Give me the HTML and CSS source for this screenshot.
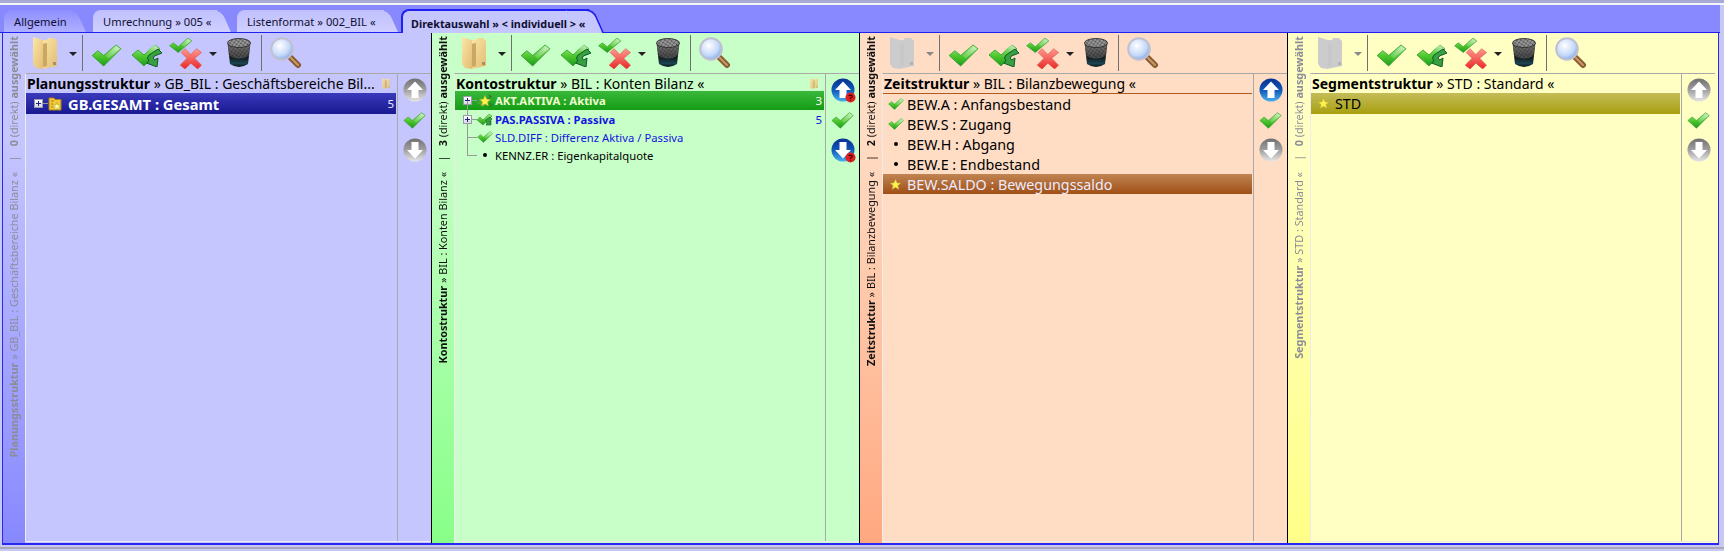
FILE: index.html
```html
<!DOCTYPE html>
<html lang="de">
<head>
    <meta charset="UTF-8">
    <title>Direktauswahl</title>
    <link rel="stylesheet" href="styles.css">
</head>
<body>
    <svg class="sprite" aria-hidden="true">
        <defs>
            <linearGradient id="g-green" x1="0" y1="0" x2="0" y2="1"><stop offset="0" stop-color="#9df07a"/><stop offset="0.55" stop-color="#4cc52c"/><stop offset="1" stop-color="#1c9a1c"/></linearGradient>
            <linearGradient id="g-tip" x1="0" y1="1" x2="1" y2="0"><stop offset="0" stop-color="#58c840"/><stop offset="1" stop-color="#d8f4d0"/></linearGradient>
            <linearGradient id="g-red" x1="0" y1="0" x2="0" y2="1"><stop offset="0" stop-color="#ff9a90"/><stop offset="1" stop-color="#e82828"/></linearGradient>
            <linearGradient id="g-folder" x1="0" y1="0" x2="1" y2="1"><stop offset="0" stop-color="#fbe6a8"/><stop offset="1" stop-color="#e2bd72"/></linearGradient>
            <linearGradient id="g-trash" x1="0" y1="0" x2="0" y2="1"><stop offset="0" stop-color="#5a5a5a"/><stop offset="0.55" stop-color="#101010"/><stop offset="0.85" stop-color="#1c4450"/><stop offset="1" stop-color="#0a1418"/></linearGradient>
            <radialGradient id="g-lens" cx="0.4" cy="0.35" r="0.75"><stop offset="0" stop-color="#ffffff"/><stop offset="0.6" stop-color="#c4d8f8"/><stop offset="1" stop-color="#6f9ae0"/></radialGradient>
            <linearGradient id="g-btn-grey" x1="0" y1="0" x2="0" y2="1"><stop offset="0" stop-color="#707070"/><stop offset="0.5" stop-color="#a0a0a0"/><stop offset="1" stop-color="#e6e6e6"/></linearGradient>
            <linearGradient id="g-btn-blue" x1="0" y1="0" x2="0" y2="1"><stop offset="0" stop-color="#0a3090"/><stop offset="0.5" stop-color="#0f58b8"/><stop offset="1" stop-color="#48b0f0"/></linearGradient>
            <pattern id="p-mesh" width="3" height="3" patternUnits="userSpaceOnUse" patternTransform="rotate(35)"><rect width="3" height="3" fill="#444"/><path d="M0 1H3M1 0V3" stroke="#c8c8c8" stroke-width="0.8"/></pattern>

            <symbol id="i-folder" viewBox="0 0 24 32">
                <path d="M9 3L14 3 15 1H21L24 4V29L9 32Z" fill="url(#g-folder)"/>
                <path d="M9 7L14 6V29L9 30Z" fill="#c9a864"/>
                <path d="M0 0L10 3V32L3 31 0 27Z" fill="url(#g-folder)"/>
                <path d="M20 25h3v3h-3z" fill="#a89060"/>
            </symbol>
            <symbol id="i-check" viewBox="0 0 32 24">
                <path d="M1 12L7 7 13 12 26 1 31 5 13 23Z" fill="url(#g-green)" stroke="#2a9a2a" stroke-width="0.8"/>
                <path d="M15 12L26 2 30 5 18 15Z" fill="url(#g-tip)"/>
            </symbol>
            <symbol id="i-check-back" viewBox="0 0 32 24">
                <path d="M1 12L7 7 13 12 24 2 29 6 13 23Z" fill="url(#g-green)" stroke="#2a9a2a" stroke-width="0.8"/>
                <path d="M17 7L24 2 28 6 21 10Z" fill="url(#g-tip)"/>
                <path d="M27 6L18 12Q15 15 18 18L15.5 20 26 24 27 15 23.5 17Q21 15 23.5 13L31 10Z" fill="#38a040" stroke="#0e5a28" stroke-width="1"/>
            </symbol>
            <symbol id="i-check-clear" viewBox="0 0 34 32">
                <path d="M0 8L4 5 9 9 19 0 23 3 9 15Z" fill="url(#g-green)" stroke="#2a9a2a" stroke-width="0.6"/>
                <path d="M12 7L19 1 22 3 15 9Z" fill="url(#g-tip)"/>
                <path d="M12 15L16 11 22 17 28 11 33 15 26 21 33 28 29 32 22 26 16 32 11 28 18 21Z" fill="url(#g-red)" stroke="#e04a40" stroke-width="0.6"/>
            </symbol>
            <symbol id="i-trash" viewBox="0 0 24 30">
                <path d="M0.5 5L3 26Q12 32 21 26L23.5 5Z" fill="url(#g-trash)"/>
                <path d="M1.5 8L2.5 18Q12 23 21.5 18L22.5 8Z" fill="url(#p-mesh)" opacity="0.45"/>
                <ellipse cx="12" cy="5" rx="11.5" ry="4.5" fill="url(#p-mesh)" stroke="#222" stroke-width="0.8"/>
            </symbol>
            <symbol id="i-lens" viewBox="0 0 32 32">
                <path d="M20 20L28 28" stroke="#8a5a30" stroke-width="6" stroke-linecap="round"/>
                <path d="M21 21L28 28" stroke="#c89a68" stroke-width="2" stroke-linecap="round"/>
                <circle cx="12" cy="12" r="10.8" fill="url(#g-lens)" stroke="#c0c0d0" stroke-width="2"/>
            </symbol>
            <symbol id="i-up-grey" viewBox="0 0 24 24">
                <circle cx="12" cy="12" r="11.5" fill="url(#g-btn-grey)"/>
                <path d="M12 3.5L20 12H15.5V20H8.5V12H4Z" fill="#fff"/>
            </symbol>
            <symbol id="i-down-grey" viewBox="0 0 24 24">
                <circle cx="12" cy="12" r="11.5" fill="url(#g-btn-grey)"/>
                <path d="M12 20.5L20 12H15.5V4H8.5V12H4Z" fill="#fff"/>
            </symbol>
            <symbol id="i-up-blue" viewBox="0 0 24 24">
                <circle cx="12" cy="12" r="11.5" fill="url(#g-btn-blue)"/>
                <path d="M12 3.5L20 12H15.5V20H8.5V12H4Z" fill="#fff"/>
            </symbol>
            <symbol id="i-down-blue" viewBox="0 0 24 24">
                <circle cx="12" cy="12" r="11.5" fill="url(#g-btn-blue)"/>
                <path d="M12 20.5L20 12H15.5V4H8.5V12H4Z" fill="#fff"/>
            </symbol>
            <symbol id="i-badge" viewBox="0 0 12 12">
                <circle cx="6" cy="6" r="5.5" fill="#e02020"/>
                <path d="M4 4.5Q6 2.5 8 4.5 8 6 6 6.5V7.5M6 8.5V9.5" fill="none" stroke="#300" stroke-width="1.2"/>
            </symbol>
            <symbol id="i-star" viewBox="0 0 14 14">
                <path d="M7 0.5L9 5 13.5 5.4 10 8.4 11.2 13.2 7 10.6 2.8 13.2 4 8.4 0.5 5.4 5 5Z" fill="#fff24a" stroke="#c8b840" stroke-width="0.6"/>
            </symbol>
            <symbol id="i-star-folder" viewBox="0 0 14 14">
                <path d="M1 1H6L7 2.5H13V13H1Z" fill="#f4c838" stroke="#a88018"/>
                <path d="M9 5L10 8 13 8.2 10.8 10 11.5 13 9 11.4 6.5 13 7.2 10 5 8.2 8 8Z" fill="#fff8a0" stroke="#98a028" stroke-width="0.5"/>
                <path d="M3 4h3M3 7h2M3 10h2" stroke="#a88018"/>
            </symbol>
            <symbol id="i-star-spark" viewBox="0 0 16 14">
                <path d="M0 9L3 6 6 9 11 4 14 6 6 13Z" fill="#49a838"/>
                <path d="M12 1L14 3 11 5M13 9L15 11 12 13" stroke="#2c7a30" stroke-width="1.4" fill="none"/>
                <path d="M8 1L9.6 5 13.5 5.4 10.6 8 11.4 12 8 10 4.6 12 5.4 8 2.5 5.4 6.4 5Z" fill="#fff24a" stroke="#98a028" stroke-width="0.5"/>
            </symbol>
            <symbol id="i-check-spark" viewBox="0 0 16 14">
                <path d="M0 8L3 5 6 8 12 2 15 4 6 13Z" fill="url(#g-green)" stroke="#2a8a2a" stroke-width="0.5"/>
                <path d="M13 5L9 8Q8 10 10 11L9 13 14 13 14 9 12.5 10 15 7Z" fill="#38a040" stroke="#0e5a28" stroke-width="0.6"/>
            </symbol>
        </defs>
    </svg>

    <div class="edge-top"></div>

    <div class="tabbar">
        <div class="tab tab-first">Allgemein</div>
        <div class="tab tab-second">Umrechnung » 005 «</div>
        <div class="tab tab-third">Listenformat » 002_BIL «</div>
        <div class="tab tab-active">Direktauswahl » &lt; individuell &gt; «</div>
    </div>

    <div class="panels">

        <section class="panel panel-blue is-idle">
            <div class="strip"><span class="strip-text"><b>Planungsstruktur</b> » GB_BIL : Geschäftsbereiche Bilanz « <span class="strip-sep">|</span> <b>0</b> (direkt) <b>ausgewählt</b></span></div>
            <div class="panel-main">
                <div class="toolbar">
                    <svg class="t-folder"><use href="#i-folder"/></svg>
                    <span class="drop"></span>
                    <span class="sep"></span>
                    <svg class="t-check"><use href="#i-check"/></svg>
                    <svg class="t-back"><use href="#i-check-back"/></svg>
                    <svg class="t-clear"><use href="#i-check-clear"/></svg>
                    <span class="drop drop-clear"></span>
                    <svg class="t-trash"><use href="#i-trash"/></svg>
                    <span class="sep sep-second"></span>
                    <svg class="t-lens"><use href="#i-lens"/></svg>
                </div>
                <div class="box">
                    <div class="tree">
                        <div class="tree-head"><span><b>Planungsstruktur</b> » GB_BIL : Geschäftsbereiche Bil...</span><svg class="head-folder"><use href="#i-folder"/></svg></div>
                        <div class="row row-big row-navy">
                            <span class="plus"></span><span class="stub"></span>
                            <svg class="row-icon"><use href="#i-star-folder"/></svg>
                            <b class="row-label">GB.GESAMT : Gesamt</b>
                            <span class="row-count">5</span>
                        </div>
                    </div>
                    <div class="side">
                        <svg class="side-btn"><use href="#i-up-grey"/></svg>
                        <svg class="side-check"><use href="#i-check"/></svg>
                        <svg class="side-btn"><use href="#i-down-grey"/></svg>
                    </div>
                </div>
            </div>
        </section>

        <section class="panel panel-green">
            <div class="strip"><span class="strip-text"><b>Kontostruktur</b> » BIL : Konten Bilanz « <span class="strip-sep">|</span> <b>3</b> (direkt) <b>ausgewählt</b></span></div>
            <div class="panel-main">
                <div class="toolbar">
                    <svg class="t-folder"><use href="#i-folder"/></svg>
                    <span class="drop"></span>
                    <span class="sep"></span>
                    <svg class="t-check"><use href="#i-check"/></svg>
                    <svg class="t-back"><use href="#i-check-back"/></svg>
                    <svg class="t-clear"><use href="#i-check-clear"/></svg>
                    <span class="drop drop-clear"></span>
                    <svg class="t-trash"><use href="#i-trash"/></svg>
                    <span class="sep sep-second"></span>
                    <svg class="t-lens"><use href="#i-lens"/></svg>
                </div>
                <div class="box">
                    <div class="tree tree-small">
                        <div class="tree-head"><span><b>Kontostruktur</b> » BIL : Konten Bilanz «</span><svg class="head-folder"><use href="#i-folder"/></svg></div>
                        <div class="row row-small row-green">
                            <span class="plus"></span><span class="stub"></span>
                            <svg class="row-icon-wide"><use href="#i-star-spark"/></svg>
                            <b class="row-label">AKT.AKTIVA : Aktiva</b>
                            <span class="row-count">3</span>
                        </div>
                        <div class="row row-small row-link row-branch">
                            <span class="plus"></span><span class="stub"></span>
                            <svg class="row-icon-wide"><use href="#i-check-spark"/></svg>
                            <b class="row-label">PAS.PASSIVA : Passiva</b>
                            <span class="row-count">5</span>
                        </div>
                        <div class="row row-small row-link row-leaf">
                            <span class="elbow"></span>
                            <svg class="row-icon-wide"><use href="#i-check"/></svg>
                            <span class="row-label">SLD.DIFF : Differenz Aktiva / Passiva</span>
                        </div>
                        <div class="row row-small row-leaf row-last">
                            <span class="elbow"></span>
                            <span class="dot-cell"><span class="dot"></span></span>
                            <span class="row-label">KENNZ.ER : Eigenkapitalquote</span>
                        </div>
                    </div>
                    <div class="side">
                        <span class="side-badged"><svg class="side-btn"><use href="#i-up-blue"/></svg><svg class="badge"><use href="#i-badge"/></svg></span>
                        <svg class="side-check"><use href="#i-check"/></svg>
                        <span class="side-badged"><svg class="side-btn"><use href="#i-down-blue"/></svg><svg class="badge"><use href="#i-badge"/></svg></span>
                    </div>
                </div>
            </div>
        </section>

        <section class="panel panel-orange">
            <div class="strip"><span class="strip-text"><b>Zeitstruktur</b> » BIL : Bilanzbewegung « <span class="strip-sep">|</span> <b>2</b> (direkt) <b>ausgewählt</b></span></div>
            <div class="panel-main">
                <div class="toolbar">
                    <svg class="t-folder is-off"><use href="#i-folder"/></svg>
                    <span class="drop drop-off"></span>
                    <span class="sep"></span>
                    <svg class="t-check"><use href="#i-check"/></svg>
                    <svg class="t-back"><use href="#i-check-back"/></svg>
                    <svg class="t-clear"><use href="#i-check-clear"/></svg>
                    <span class="drop drop-clear"></span>
                    <svg class="t-trash"><use href="#i-trash"/></svg>
                    <span class="sep sep-second"></span>
                    <svg class="t-lens"><use href="#i-lens"/></svg>
                </div>
                <div class="box">
                    <div class="tree">
                        <div class="tree-head tree-head-ruled"><span><b>Zeitstruktur</b> » BIL : Bilanzbewegung «</span></div>
                        <div class="row row-big row-flat"><span class="flat-cell"><svg class="flat-check"><use href="#i-check"/></svg></span><span class="row-label">BEW.A : Anfangsbestand</span></div>
                        <div class="row row-big row-flat"><span class="flat-cell"><svg class="flat-check"><use href="#i-check"/></svg></span><span class="row-label">BEW.S : Zugang</span></div>
                        <div class="row row-big row-flat"><span class="flat-cell"><span class="dot"></span></span><span class="row-label">BEW.H : Abgang</span></div>
                        <div class="row row-big row-flat"><span class="flat-cell"><span class="dot"></span></span><span class="row-label">BEW.E : Endbestand</span></div>
                        <div class="row row-big row-flat row-brown"><span class="flat-cell"><svg class="flat-star"><use href="#i-star"/></svg></span><span class="row-label">BEW.SALDO : Bewegungssaldo</span></div>
                    </div>
                    <div class="side">
                        <svg class="side-btn"><use href="#i-up-blue"/></svg>
                        <svg class="side-check"><use href="#i-check"/></svg>
                        <svg class="side-btn"><use href="#i-down-grey"/></svg>
                    </div>
                </div>
            </div>
        </section>

        <section class="panel panel-yellow is-idle">
            <div class="strip"><span class="strip-text"><b>Segmentstruktur</b> » STD : Standard « <span class="strip-sep">|</span> <b>0</b> (direkt) <b>ausgewählt</b></span></div>
            <div class="panel-main">
                <div class="toolbar">
                    <svg class="t-folder is-off"><use href="#i-folder"/></svg>
                    <span class="drop drop-off"></span>
                    <span class="sep"></span>
                    <svg class="t-check"><use href="#i-check"/></svg>
                    <svg class="t-back"><use href="#i-check-back"/></svg>
                    <svg class="t-clear"><use href="#i-check-clear"/></svg>
                    <span class="drop drop-clear"></span>
                    <svg class="t-trash"><use href="#i-trash"/></svg>
                    <span class="sep sep-second"></span>
                    <svg class="t-lens"><use href="#i-lens"/></svg>
                </div>
                <div class="box">
                    <div class="tree">
                        <div class="tree-head"><span><b>Segmentstruktur</b> » STD : Standard «</span></div>
                        <div class="row row-big row-flat row-olive"><span class="flat-cell"><svg class="flat-star"><use href="#i-star"/></svg></span><span class="row-label">STD</span></div>
                    </div>
                    <div class="side">
                        <svg class="side-btn"><use href="#i-up-grey"/></svg>
                        <svg class="side-check"><use href="#i-check"/></svg>
                        <svg class="side-btn"><use href="#i-down-grey"/></svg>
                    </div>
                </div>
            </div>
        </section>

    </div>

    <div class="edge-bottom"></div>
</body>
</html>
```

FILE: styles.css
```css
html, body {
    margin: 0;
    height: 551px;
    overflow: hidden;
}
body {
    width: 1724px;
    display: flex;
    flex-direction: column;
    background: #c8c8f4;
    font-family: "Noto Sans", "Open Sans", sans-serif;
    color: #000;
}
svg {
    display: block;
    flex: none;
}
.sprite {
    width: 0;
    height: 0;
    position: absolute;
}

/* window frame */
.edge-top {
    height: 3px;
    flex: none;
    background: #a9a9d6;
    border-bottom: 2px solid #f4f4fc;
}
.edge-bottom {
    flex: none;
    height: 4px;
    margin-top: 2px;
    box-sizing: border-box;
    background: #c8c8f4;
    border-top: 2px solid #a8a8b8;
}

/* tabs */
.tabbar {
    flex: none;
    height: 28px;
    margin: 0 4px 0 0;
    box-sizing: border-box;
    display: flex;
    align-items: flex-end;
    padding-left: 4px;
    background: #8888ff;
    border-bottom: 1px solid #2020f0;
    font-size: 11.2px;
    color: #101030;
}
.tab {
    position: relative;
    z-index: 0;
    height: 22px;
    line-height: 24px;
    box-sizing: border-box;
    border-radius: 8px 0 0 0;
    white-space: nowrap;
    padding-left: 10px;
}
.tab::after {
    content: "";
    position: absolute;
    z-index: -1;
    top: 0;
    bottom: 0;
    right: -9px;
    width: 26px;
    transform: skewX(24deg);
    border-radius: 0 8px 0 0;
    background: inherit;
}
.tab-first {
    width: 68px;
    background: linear-gradient(#8e8eff, #b0b0ff);
}
.tab-second {
    width: 124px;
    margin-left: 21px;
    background: linear-gradient(#c0c0ff, #cfcfff);
}
.tab-third {
    width: 147px;
    margin-left: 20px;
    background: linear-gradient(#c0c0ff, #cfcfff);
}
.tab-active {
    width: 188px;
    height: 24px;
    margin-left: 17px;
    margin-bottom: -1px;
    padding-left: 8px;
    line-height: 25px;
    font-size: 10.8px;
    font-weight: 700;
    background: #c6c6ff;
    border: 2px solid #2020f0;
    border-width: 2px 0 0 2px;
}
.tab-active::after {
    border: solid #2020f0;
    border-width: 2px 2px 0 0;
    top: -2px;
    right: -10px;
}

/* panels */
.panels {
    flex: 1;
    min-height: 0;
    display: flex;
    margin-left: 2px;
    margin-right: 5px;
    border: solid #2828f0;
    border-width: 0 1px 2px 1px;
}
.panel {
    width: 428px;
    flex: none;
    display: flex;
    border-left: 1px solid #000;
    box-sizing: border-box;
    padding-bottom: 1px;
}
.panel:first-child {
    border-left: none;
}
.panel:last-child {
    flex: 1;
    padding-right: 3px;
}
.panel-blue { background: #c6c6ff; --strip-end: #8888ff; }
.panel-green { background: #c8ffc8; --strip-end: #88ff88; }
.panel-orange { background: #ffdcc4; --strip-end: #ffa880; }
.panel-yellow { background: #ffffc4; --strip-end: #ffff88; }

.strip {
    width: 22px;
    flex: none;
    margin-bottom: -1px;
    display: flex;
    justify-content: center;
    padding-top: 3px;
    box-sizing: border-box;
    background: linear-gradient(transparent 20%, var(--strip-end));
}
.strip-text {
    writing-mode: vertical-rl;
    transform: rotate(180deg);
    font-size: 10.8px;
    line-height: 20px;
    height: max-content;
    white-space: pre-wrap;
    color: #101010;
}
.strip-sep {
    padding: 8px 0 6px;
}
.is-idle .strip-text {
    color: #8c8c98;
}
.panel-main {
    flex: 1;
    min-width: 0;
    display: flex;
    flex-direction: column;
    padding-left: 1px;
}

/* toolbar */
.toolbar {
    flex: none;
    height: 40px;
    display: flex;
    align-items: center;
    padding-left: 7px;
    box-sizing: border-box;
}
.t-folder { width: 24px; height: 32px; }
.t-check { width: 31px; height: 23px; margin-left: 8px; margin-top: 4px; }
.t-back { width: 32px; height: 24px; margin-left: 9px; margin-top: 4px; }
.t-clear { width: 34px; height: 31px; margin-left: 6px; }
.t-trash { width: 24px; height: 30px; margin-left: 10px; }
.t-lens { width: 32px; height: 32px; margin-left: 8px; }
.is-off {
    filter: grayscale(1) brightness(1.45) contrast(0.6);
}
.drop {
    width: 0;
    height: 0;
    margin-left: 12px;
    margin-top: 2px;
    border: solid transparent;
    border-width: 4px 4px 0 4px;
    border-top-color: #222;
}
.drop-off {
    border-top-color: #888;
}
.drop-clear {
    margin-left: 6px;
}
.sep {
    width: 1px;
    height: 36px;
    margin-left: 5px;
    background: #707070;
}
.sep-second {
    margin-left: 10px;
}

/* list box */
.box {
    flex: 1;
    min-height: 0;
    display: flex;
    box-sizing: border-box;
    margin-left: -1px;
    border: 1px solid #a8a8a8;
    border-bottom-color: #ececec;
    border-left-color: #ececec;
    border-right: none;
}
.tree {
    flex: 1;
    min-width: 0;
    padding-right: 1px;
    border-right: 1px solid #a8a8a8;
    font-size: 14px;
}
.side {
    width: 33px;
    flex: none;
    display: flex;
    flex-direction: column;
    align-items: center;
    padding-top: 4px;
    box-sizing: border-box;
}
.side-btn {
    width: 24px;
    height: 24px;
}
.side-check {
    width: 23px;
    height: 17px;
    margin: 10px 0 9px;
}
.side-badged {
    position: relative;
    display: block;
    width: 24px;
    height: 24px;
}
.badge {
    position: absolute;
    right: -1px;
    bottom: -1px;
    width: 11px;
    height: 11px;
}

/* rows */
.tree-head {
    height: 19px;
    line-height: 22px;
    padding-left: 1px;
    display: flex;
    justify-content: space-between;
    align-items: center;
    white-space: nowrap;
    font-size: 14px;
}
.tree-small .tree-head {
    margin-bottom: -2px;
}
.tree-head-ruled {
    height: 20px;
    border-bottom: 1px solid #b05a20;
    box-sizing: border-box;
}
.head-folder {
    width: 8px;
    height: 11px;
    margin-right: 6px;
    opacity: 0.85;
}
.row {
    position: relative;
    display: flex;
    align-items: center;
    box-sizing: border-box;
    white-space: nowrap;
}
.row-big {
    height: 21px;
    font-size: 14.3px;
}
.row-small {
    height: 18px;
    font-size: 11.3px;
}
.row-count {
    margin-left: auto;
    margin-right: 2px;
    font-size: 11.5px;
}
.plus {
    position: relative;
    width: 9px;
    height: 9px;
    margin-left: 8px;
    flex: none;
    box-sizing: border-box;
    border: 1px solid #9a9aa8;
    background: linear-gradient(#fff, #d8d8e8);
}
.plus::before {
    content: "";
    position: absolute;
    left: 1px;
    top: 3px;
    width: 5px;
    height: 1px;
    background: #202080;
}
.plus::after {
    content: "";
    position: absolute;
    left: 3px;
    top: 1px;
    width: 1px;
    height: 5px;
    background: #202080;
}
.stub {
    width: 5px;
    height: 1px;
    background: #999;
    flex: none;
}
.row-icon {
    width: 14px;
    height: 14px;
    margin-right: 6px;
}
.row-navy {
    background: linear-gradient(#3a3abc, #181890);
    color: #fff;
}
.row-navy .row-label {
    font-size: 14.7px;
}
.row-navy .row-count {
    color: #e8e8ff;
}
.row-green {
    background: linear-gradient(#3ab83a, #149c14);
    color: #fff;
    height: 19px;
}
.row-green .row-label {
    color: #f0ffd0;
}
.row-link {
    color: #1414e0;
}
.row-icon-wide {
    width: 16px;
    height: 14px;
    margin-right: 2px;
}
.row-branch::before {
    content: "";
    position: absolute;
    left: 12px;
    top: -9px;
    width: 1px;
    height: 22px;
    background: #999;
}
.row-leaf {
    padding-left: 12px;
}
.elbow {
    position: relative;
    width: 10px;
    height: 1px;
    flex: none;
    background: #999;
}
.elbow::before {
    content: "";
    position: absolute;
    left: 0;
    bottom: 0;
    width: 1px;
    height: 14px;
    background: #999;
}
.row-last .elbow::before {
    height: 18px;
}
.dot-cell {
    width: 16px;
    margin-right: 2px;
    display: flex;
    justify-content: center;
}
.dot {
    width: 4px;
    height: 4px;
    border-radius: 50%;
    background: #000;
}
.row-flat {
    height: 20px;
}
.flat-cell {
    width: 24px;
    flex: none;
    display: flex;
    justify-content: center;
    padding-left: 1px;
    box-sizing: border-box;
}
.flat-check {
    width: 16px;
    height: 12px;
}
.flat-star {
    width: 11px;
    height: 11px;
}
.row-brown {
    background: linear-gradient(#c08452, #a04f16);
    color: #ecebff;
}
.row-olive {
    height: 21px;
    background: linear-gradient(#c4bc58, #a8a010);
}
```
